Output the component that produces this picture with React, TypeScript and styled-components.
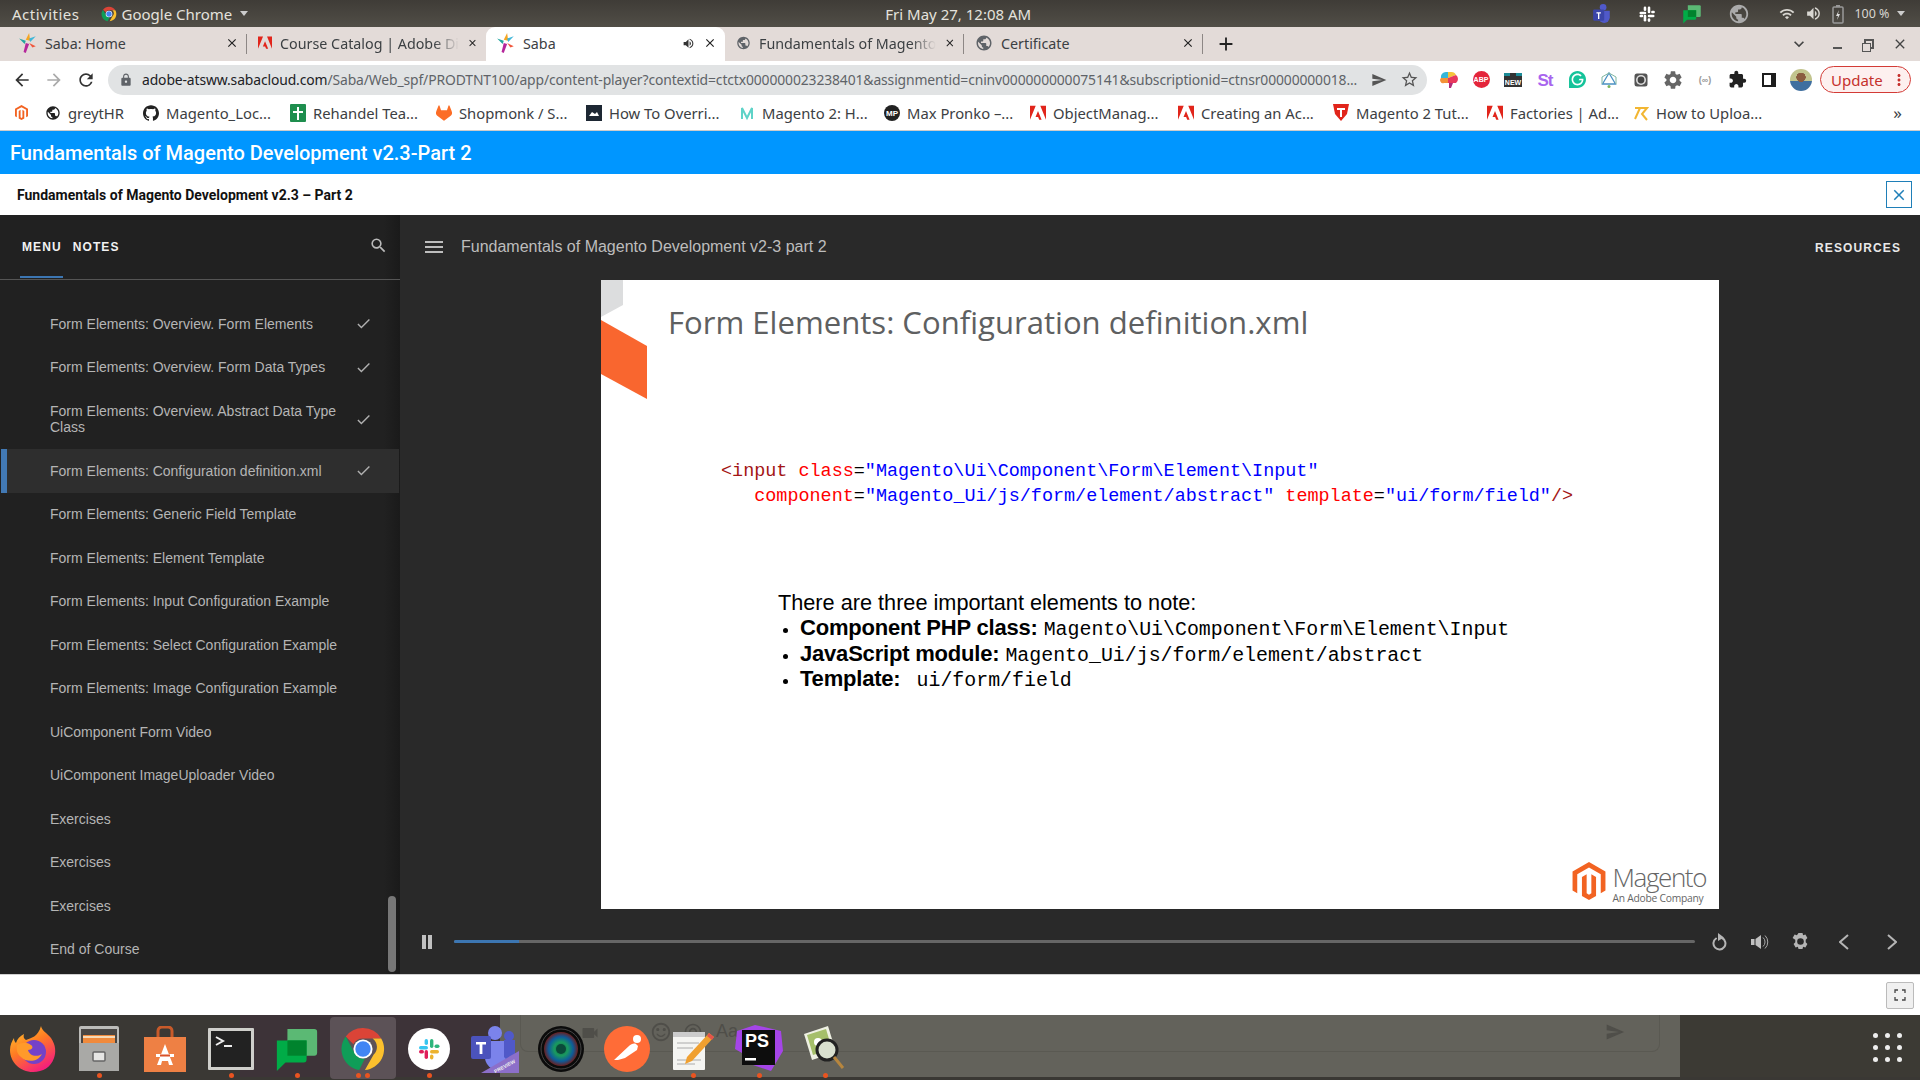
import React from 'react';
import styled, { createGlobalStyle } from 'styled-components';
import {
  SiGithub, SiGitlab, SiMagento, SiGrammarly,
} from 'react-icons/si';
import {
  MdArrowBack, MdArrowForward, MdRefresh, MdLock, MdStarBorder, MdSearch, MdMenu, MdCheck,
  MdClose, MdSettings, MdMoreVert, MdExtension, MdVolumeUp, MdWifi, MdAdd,
  MdExpandMore, MdPublic, MdSend, MdSentimentSatisfiedAlt,
  MdVideocam, MdAlternateEmail,
} from 'react-icons/md';

const GlobalStyle = createGlobalStyle`
  html, body { margin: 0; padding: 0; background: #fff; }
  body { font-family: "Liberation Sans", Arial, sans-serif; overflow: hidden; }
  * { box-sizing: border-box; }
`;

const Screen = styled.div`
  width: 1920px;
  height: 1080px;
  display: flex;
  flex-direction: column;
  overflow: hidden;
`;

/* ---- ubuntu top bar ---- */
const TopBar = styled.div`
  height: 27px;
  flex: none;
  display: grid;
  grid-template-columns: 1fr auto 1fr;
  align-items: center;
  padding: 0 15.5px 0 12px;
  background: linear-gradient(#3f3c37, #514e47);
  color: #e4e2dd;
  font-family: "Noto Sans", sans-serif;
  font-size: 15px;
`;
const TopLeft = styled.div`
  display: flex;
  align-items: center;
`;
const ActivitiesLabel = styled.span`
  letter-spacing: 0.5px;
`;
const AppMenu = styled.div`
  display: flex;
  align-items: center;
  gap: 5px;
  margin-left: 21px;
`;
const Caret = styled.span<{ $tight?: boolean }>`
  width: 0;
  height: 0;
  margin-left: ${p => (p.$tight ? -3 : 3)}px;
  border-left: 4px solid transparent;
  border-right: 4px solid transparent;
  border-top: 5px solid #ccc;
`;
const TopRight = styled.div`
  display: flex;
  align-items: center;
  justify-content: flex-end;
  gap: 26px;
  color: #d8d6d1;
`;
const TrayGap = styled.div`
  display: flex;
  align-items: center;
  gap: 10px;
  margin-left: 3.5px;
`;
const TrayText = styled.span`
  font-size: 12.5px;
`;

/* ---- chrome ---- */
const TabStrip = styled.div`
  height: 34px;
  flex: none;
  display: flex;
  align-items: stretch;
  padding-left: 8px;
  background: #e3dbd8;
  font-family: "Noto Sans", sans-serif;
  font-size: 14.3px;
  color: #3c4043;
`;
const Tab = styled.div<{ $active?: boolean; $sep?: boolean }>`
  position: relative;
  width: 239px;
  display: flex;
  align-items: center;
  gap: 8px;
  padding: 0 8px 2px 11px;
  background: ${p => (p.$active ? '#fff' : 'transparent')};
  border-radius: ${p => (p.$active ? '9px 9px 0 0' : '0')};
  &::after {
    content: '';
    display: ${p => (p.$sep ? 'block' : 'none')};
    position: absolute;
    right: 0;
    top: 7px;
    bottom: 7px;
    width: 1px;
    background: #8d8785;
  }
`;
const TabTitle = styled.span<{ $fade?: boolean }>`
  flex: 1;
  white-space: nowrap;
  ${p => (p.$fade ? `
    -webkit-mask-image: linear-gradient(90deg, #000 86%, transparent);
    mask-image: linear-gradient(90deg, #000 86%, transparent);
  ` : '')}
`;
const NewTab = styled.div`
  display: flex;
  align-items: center;
  margin-left: 12px;
  color: #222;
`;
const WindowControls = styled.div`
  margin-left: auto;
  display: flex;
  align-items: center;
  gap: 16px;
  padding-right: 12px;
  color: #444;
`;
const Minimize = styled.span`
  width: 9px;
  height: 2px;
  margin: 8px 6px 0 8px;
  background: #555;
`;
const Restore = styled.span`
  position: relative;
  width: 10px;
  height: 10px;
  border: 2px solid #555;
  margin-right: 2px;
  &::after {
    content: '';
    position: absolute;
    left: -4px;
    top: 2px;
    width: 7px;
    height: 7px;
    border: 1.5px solid #555;
    background: #e3dbd8;
  }
`;

const Toolbar = styled.div`
  height: 37px;
  flex: none;
  display: flex;
  align-items: center;
  padding-left: 12px;
  background: #fff;
  color: #444;
`;
const NavIcons = styled.div`
  display: flex;
  gap: 12px;
  margin-right: 12px;
`;
const Omnibox = styled.div`
  width: 1319px;
  height: 30px;
  flex: none;
  display: flex;
  align-items: center;
  padding: 0 8px 0 11px;
  border-radius: 15px;
  background: #e1e3e4;
  font-family: "Noto Sans", sans-serif;
  font-size: 13.9px;
  color: #5f6368;
`;
const UrlText = styled.div`
  flex: 1;
  margin-left: 9px;
  white-space: nowrap;
  letter-spacing: -0.12px;
  b { font-weight: 400; color: #202124; }
`;
const OmniActions = styled.div`
  display: flex;
  align-items: center;
  gap: 13px;
  color: #555;
`;
const Extensions = styled.div`
  display: flex;
  align-items: center;
  margin-left: 6px;
`;
const ExtSlot = styled.div`
  width: 32px;
  height: 30px;
  display: flex;
  align-items: center;
  justify-content: center;
  font-family: "Liberation Sans", sans-serif;
`;
const AbpBadge = styled.span`
  width: 17px;
  height: 17px;
  display: flex;
  align-items: center;
  justify-content: center;
  border-radius: 50%;
  background: #e4253b;
  color: #fff;
  font-size: 7px;
  font-weight: 700;
`;
const NewBadge = styled.span`
  padding: 3px 1px 0;
  border-top: 3px dashed #1c8b97;
  background: #333;
  color: #fff;
  font-size: 7px;
  font-weight: 700;
  line-height: 8px;
`;
const StBadge = styled.span`
  margin-top: 2px;
  color: #a865ee;
  font-size: 17px;
  font-weight: 700;
  letter-spacing: -1px;
`;
const WaveBadge = styled.span`
  color: #999;
  font-size: 9px;
  font-weight: 700;
`;
const Avatar = styled.span`
  width: 22px;
  height: 22px;
  border-radius: 50%;
  background: radial-gradient(circle at 50% 38%, #8a5b3f 0 26%, transparent 27%),
    linear-gradient(#c2c48e 0 55%, #3f6f9f 55%);
`;
const UpdatePill = styled.div`
  width: 91px;
  height: 27px;
  margin-left: 3px;
  display: flex;
  align-items: center;
  justify-content: space-between;
  padding: 0 2px 0 10px;
  border: 1px solid #d33b36;
  border-radius: 14px;
  background: #fdf0ef;
  color: #c5302c;
  font-family: "Noto Sans", sans-serif;
  font-size: 15px;
`;

const Bookmarks = styled.div`
  height: 33px;
  flex: none;
  display: flex;
  align-items: center;
  padding: 0 0 3px 14px;
  background: #fff;
  border-bottom: 1px solid #ccc;
  font-family: "Noto Sans", sans-serif;
  font-size: 14.8px;
  color: #3c4043;
`;
const Bookmark = styled.div<{ $w: number }>`
  width: ${p => p.$w}px;
  flex: none;
  display: flex;
  align-items: center;
  gap: 7px;
  white-space: nowrap;
`;
const MoreBookmarks = styled.span`
  margin-left: auto;
  padding-right: 18px;
  font-size: 17px;
`;

/* ---- course page ---- */
const CourseBar = styled.div`
  height: 43px;
  flex: none;
  display: flex;
  align-items: center;
  padding-left: 10px;
  background: #0096ff;
  color: #fff;
  font-family: Roboto, sans-serif;
  font-size: 20px;
  font-weight: 500;
`;
const SubBar = styled.div`
  height: 41px;
  flex: none;
  display: flex;
  align-items: center;
  justify-content: space-between;
  padding: 0 8px 0 17px;
  background: #fff;
  color: #111;
  font-family: Roboto, sans-serif;
  font-size: 14px;
  font-weight: 700;
`;
const CloseButton = styled.div`
  width: 26px;
  height: 27px;
  display: flex;
  align-items: center;
  justify-content: center;
  border: 1px solid #1f7fb8;
  color: #1f7fb8;
`;

const Player = styled.div`
  height: 759px;
  flex: none;
  display: flex;
  background: #292929;
`;
const Sidebar = styled.aside`
  position: relative;
  width: 400px;
  flex: none;
  display: flex;
  flex-direction: column;
  overflow: hidden;
  background: linear-gradient(90deg, #212121 96%, #1a1a1a);
`;
const SideHeader = styled.div`
  height: 65px;
  flex: none;
  display: flex;
  align-items: center;
  justify-content: space-between;
  padding: 0 12px 0 22px;
  border-bottom: 1px solid #555;
`;
const SideTabs = styled.div`
  display: flex;
  gap: 11px;
`;
const SideTab = styled.span<{ $active?: boolean }>`
  position: relative;
  color: #f2f2f2;
  font-size: 12px;
  font-weight: 700;
  letter-spacing: 1.1px;
  &::after {
    content: '';
    display: ${p => (p.$active ? 'block' : 'none')};
    position: absolute;
    left: -2px;
    right: -1px;
    top: 36px;
    height: 2px;
    background: #3c76b2;
  }
`;
const SearchIcon = styled.span`
  display: flex;
  margin-top: -3px;
  color: #bbb;
`;
const Lessons = styled.div`
  flex: 1;
  display: flex;
  flex-direction: column;
  padding: 22px 0 0 0;
`;
const Lesson = styled.div<{ $active?: boolean; $tall?: boolean }>`
  width: 398px;
  height: ${p => (p.$tall ? 60 : 43.5)}px;
  flex: none;
  display: flex;
  align-items: center;
  justify-content: space-between;
  padding: 0 27px 0 50px;
  margin-left: 1px;
  background: ${p => (p.$active ? '#2e2e2e' : 'transparent')};
  border-left: ${p => (p.$active ? '6px solid #4279b4' : '0')};
  padding-left: ${p => (p.$active ? 43 : 49)}px;
  color: #b5b5b5;
  font-size: 14px;
  line-height: 16px;
`;
const LessonTitle = styled.span`
  width: 300px;
`;
const CheckMark = styled.span`
  display: flex;
  color: #b0b0b0;
`;
const ScrollThumb = styled.div`
  position: absolute;
  left: 388px;
  bottom: 2px;
  width: 8px;
  height: 76px;
  border-radius: 4px;
  background: #777;
`;

const Stage = styled.main`
  flex: 1;
  display: flex;
  flex-direction: column;
  min-width: 0;
`;
const StageHeader = styled.div`
  height: 65px;
  flex: none;
  display: flex;
  align-items: center;
  padding: 0 19px 2px 22px;
  color: #bdbdbd;
  font-size: 16px;
`;
const StageTitle = styled.span`
  flex: 1;
  margin-left: 15px;
`;
const ResourcesLink = styled.span`
  margin-top: 2px;
  color: #e8e8e8;
  font-size: 12px;
  font-weight: 700;
  letter-spacing: 1.1px;
`;
const SlideArea = styled.div`
  flex: 1;
  padding-left: 201px;
`;
const Slide = styled.section`
  position: relative;
  width: 1118px;
  height: 629px;
  padding: 16px 0 0 67px;
  background: #fff;
  color: #000;
`;
const SlideCorner = styled.svg`
  position: absolute;
  left: 0;
  top: 0;
`;
const SlideTitle = styled.h1`
  margin: 0;
  color: #5e6061;
  font-family: "Open Sans", sans-serif;
  font-size: 31.1px;
  font-weight: 400;
  line-height: 52px;
`;
const CodeBlock = styled.pre`
  margin: 112px 0 0 53px;
  font-family: "Liberation Mono", monospace;
  font-size: 18.45px;
  line-height: 24.5px;
`;
const Tag = styled.span`
  color: #a31515;
`;
const Attr = styled.span`
  color: #ff0000;
`;
const Str = styled.span`
  color: #0000ff;
`;
const Notes = styled.div`
  width: fit-content;
  margin: 81px 0 0 110px;
  font-size: 21.7px;
  line-height: 25.4px;
`;
const NoteList = styled.ul`
  margin: 0;
  padding: 0 0 0 22px;
  li { padding: 0; height: 25.4px; }
  li::marker { font-size: 18px; }
`;
const NoteLabel = styled.b`
  font-size: 22px;
  letter-spacing: -0.2px;
`;
const NoteCode = styled.span<{ $indent?: boolean }>`
  margin-left: ${p => (p.$indent ? 10 : 0)}px;
  font-family: "Liberation Mono", monospace;
  font-size: 19.9px;
  line-height: 1;
`;
const BrandMark = styled.div`
  position: absolute;
  right: 13px;
  bottom: 5px;
  display: flex;
  gap: 4px;
  color: #f26322;
`;
const BrandText = styled.div`
  display: flex;
  flex-direction: column;
  color: #666;
`;
const BrandName = styled.span`
  font-family: "Open Sans", sans-serif;
  font-size: 26px;
  font-weight: 300;
  letter-spacing: -1.4px;
  line-height: 30px;
`;
const BrandSub = styled.span`
  font-family: "Open Sans", sans-serif;
  font-size: 10.3px;
  letter-spacing: -0.25px;
  line-height: 12px;
`;
const Controls = styled.div`
  height: 65px;
  flex: none;
  display: flex;
  align-items: center;
  padding: 0 3px 0 22px;
  color: #b5b5b5;
`;
const ProgressTrack = styled.div`
  width: 1241px;
  height: 3px;
  flex: none;
  margin: 0 4px 0 22px;
  border-radius: 2px;
  overflow: hidden;
  background: #666;
`;
const ProgressFill = styled.div`
  height: 100%;
  background: #3c76b2;
`;
const ControlIcon = styled.span<{ $w: number }>`
  width: ${p => p.$w}px;
  flex: none;
  display: flex;
  justify-content: center;
`;

const FooterBand = styled.div`
  height: 41px;
  flex: none;
  display: flex;
  align-items: center;
  justify-content: flex-end;
  padding: 0 6px 0 0;
  border-top: 1px solid #d0d0d0;
  background: #fff;
`;
const FullscreenButton = styled.div`
  width: 28px;
  height: 27px;
  display: flex;
  align-items: center;
  justify-content: center;
  border: 1px solid #bbb;
  border-radius: 2px;
  background: #f0f0f0;
  color: #444;
`;

/* ---- ubuntu dock ---- */
const Dock = styled.div`
  position: relative;
  flex: 1;
  display: flex;
  background: linear-gradient(90deg, #3a3834 0 240px, #3d3338 240px 500px, #63625b 500px 1680px, #3c3a34 1680px);
  box-shadow: inset 0 -3px 0 #3a3834;
`;
const DockItem = styled.div<{ $active?: boolean }>`
  position: relative;
  width: 66px;
  height: 62px;
  margin-top: 2px;
  padding-top: 1px;
  flex: none;
  display: flex;
  align-items: center;
  justify-content: center;
  border-radius: 4px;
  background: ${p => (p.$active ? '#5c5257' : 'transparent')};
`;
const DockDots = styled.div`
  position: absolute;
  bottom: 1px;
  left: 0;
  right: 0;
  display: flex;
  justify-content: center;
  gap: 4px;
`;
const DockDot = styled.span`
  width: 5px;
  height: 5px;
  border-radius: 50%;
  background: #e95420;
`;
const GridButton = styled.div`
  position: absolute;
  right: 18px;
  top: 18px;
  display: grid;
  grid-template-columns: repeat(3, 5px);
  gap: 7px 7px;
`;
const GridDot = styled.span`
  width: 5px;
  height: 5px;
  border-radius: 50%;
  background: #eee;
`;
const GhostIcon = styled.span<{ $x: number; $y: number }>`
  position: absolute;
  left: ${p => p.$x}px;
  top: ${p => p.$y}px;
  color: #4f4e49;
  font-size: 18px;
  line-height: 18px;
`;
const GhostBox = styled.div`
  position: absolute;
  left: 520px;
  width: 1140px;
  top: 0;
  height: 37px;
  border: 1px solid #5a5952;
  border-top: 0;
  border-radius: 0 0 8px 8px;
`;
const DockIconWrap = styled.span`
  position: relative;
  display: flex;
`;

/* ---- favicons ---- */
const SabaIcon = () => (
  <svg width="18" height="20" viewBox="0 0 16 18">
    <path d="M9 0l1 7-4-1z" fill="#f5a623" />
    <path d="M15 3L10 8 9 5z" fill="#3fb6d8" />
    <path d="M0 5l6 2-1 3z" fill="#23a6a0" />
    <path d="M6 9l3 1-3 8-2-1z" fill="#b5279b" />
    <path d="M9 9l6 3-3 1z" fill="#f0563c" />
  </svg>
);
const AdobeIcon = ({ size = 15 }: { size?: number }) => (
  <svg width={size} height={size} viewBox="0 0 24 24" fill="#e1251b">
    <path d="M0 1h8.600L0 22zM24 1h-8.600L24 22zM12 9l5.400 13h-3.600l-1.600-4H8.300z" />
  </svg>
);
const ChromeFavicon = ({ size = 16 }: { size?: number }) => (
  <svg width={size} height={size} viewBox="0 0 48 48">
    <path d="M24 2a22 22 0 0 1 19 11H24a11 11 0 0 0-10 6L6 11A22 22 0 0 1 24 2z" fill="#db4437" />
    <path d="M43 13a22 22 0 0 1-17 33l9-16a11 11 0 0 0-1-17z" fill="#fbc02d" />
    <path d="M6 11l9 17a11 11 0 0 0 11 6l-6 12A22 22 0 0 1 6 11z" fill="#0f9d58" />
    <circle cx="24" cy="24" r="10" fill="#fff" />
    <circle cx="24" cy="24" r="8" fill="#4285f4" />
  </svg>
);
const TeamsTray = () => (
  <svg width="20" height="20" viewBox="0 0 18 18">
    <circle cx="10" cy="3" r="3" fill="#5059c9" />
    <path d="M6 6h10v6a5 5 0 0 1-10 0z" fill="#5059c9" />
    <rect x="1" y="5" width="10" height="10" rx="1" fill="#3b45a8" />
    <path d="M4 7.500h4v1H6.600v5H5.400v-5H4z" fill="#fff" />
  </svg>
);
const SlackGlyph = ({ size = 18, mono }: { size?: number; mono?: boolean }) => {
  const c = mono ? ['#fff', '#fff', '#fff', '#fff'] : ['#36c5f0', '#2eb67d', '#ecb22e', '#e01e5a'];
  return (
    <svg width={size} height={size} viewBox="0 0 24 24">
      <rect x="2" y="9" width="9" height="3.400" rx="1.700" fill={c[0]} />
      <rect x="7.600" y="2" width="3.400" height="6" rx="1.700" fill={c[0]} />
      <rect x="13" y="2" width="3.400" height="9" rx="1.700" fill={c[1]} />
      <rect x="17.500" y="7.600" width="5" height="3.400" rx="1.700" fill={c[1]} />
      <rect x="13" y="13" width="9" height="3.400" rx="1.700" fill={c[2]} />
      <rect x="13" y="17.500" width="3.400" height="5" rx="1.700" fill={c[2]} />
      <rect x="7.600" y="13" width="3.400" height="9" rx="1.700" fill={c[3]} />
      <rect x="2" y="13" width="5" height="3.400" rx="1.700" fill={c[3]} />
    </svg>
  );
};
const ChatIcon = ({ size = 20 }: { size?: number }) => (
  <svg width={size} height={size} viewBox="0 0 48 48">
    <path d="M14 3h28a3 3 0 0 1 3 3v22a3 3 0 0 1-3 3H14z" fill="#5bb974" />
    <path d="M3 15h31v20a3 3 0 0 1-3 3H12l-9 9z" fill="#00ac47" />
    <path d="M14 15h20v16H14z" fill="#00832d" />
  </svg>
);
const GlobeGrey = ({ size = 20, color = '#555' }: { size?: number; color?: string }) => (
  <MdPublic size={size} color={color} />
);
const BatteryIcon = () => (
  <svg width="12" height="20" viewBox="0 0 12 20">
    <rect x="1" y="3" width="10" height="16" rx="1" fill="none" stroke="#999" strokeWidth="1.500" />
    <rect x="4" y="1" width="4" height="2" fill="#999" />
    <path d="M7 6L4 12h2l-1 4 3-6H6z" fill="#ddd" />
  </svg>
);
const BrainIcon = () => (
  <svg width="18" height="17" viewBox="0 0 18 17">
    <path d="M1 7a5 5 0 0 1 5-6h3l-1 6z" fill="#35b6d9" />
    <path d="M8 1h3a5 5 0 0 1 5 3l-8 3z" fill="#f5c33b" />
    <path d="M1 7h8l-1 5H4a3 3 0 0 1-3-5z" fill="#f39237" />
    <path d="M8 7l8-3a5 5 0 0 1 0 8H8z" fill="#e8385c" />
    <path d="M9 12h4l-2 5h-2z" fill="#b12a78" />
  </svg>
);
const HexGraph = () => (
  <svg width="18" height="18" viewBox="0 0 18 18" fill="none">
    <path d="M9 2l6.500 11h-13z" stroke="#4a90c2" strokeWidth="1.300" />
    <path d="M9 2L2 6v7M9 2l7 4v7" stroke="#7fb6a0" strokeWidth="1" />
    <circle cx="9" cy="15.500" r="1.500" fill="#7ab55c" />
  </svg>
);
const RecordIcon = () => (
  <svg width="14" height="14" viewBox="0 0 14 14">
    <rect x="0.500" y="0.500" width="13" height="13" rx="2.500" fill="#555" />
    <circle cx="7" cy="7" r="5" fill="#ddd" />
    <circle cx="7" cy="7" r="3.400" fill="#444" />
  </svg>
);
const BugGear = () => <MdSettings size={22} color="#666" />;
const PanelIcon = () => (
  <svg width="14" height="14" viewBox="0 0 14 14">
    <rect width="14" height="14" fill="#1d1d1d" />
    <rect x="2" y="2" width="7" height="10" fill="#fff" />
  </svg>
);
const MaxPronko = () => (
  <svg width="16" height="16" viewBox="0 0 16 16">
    <circle cx="8" cy="8" r="8" fill="#222" />
    <text x="8" y="11" textAnchor="middle" fontSize="8" fontWeight="700" fontFamily="Liberation Sans" fill="#fff">MP</text>
  </svg>
);
const ShieldT = () => (
  <svg width="16" height="17" viewBox="0 0 16 17">
    <path d="M0 0h16l-2 10-6 7-6-7z" fill="#e1251b" />
    <path d="M4 4h8v2H9v7H7V6H4z" fill="#fff" />
  </svg>
);
const FoxIcon = () => <SiGitlab size={16} color="#fc6d26" />;
const CrossIcon = () => (
  <svg width="16" height="18" viewBox="0 0 16 18">
    <rect width="16" height="18" rx="1" fill="#1e8e4e" />
    <path d="M7 3h2v4h4v2H9v7H7V9H3V7h4z" fill="#fff" />
  </svg>
);
const DarkCard = () => (
  <svg width="16" height="16" viewBox="0 0 16 16">
    <rect width="16" height="16" fill="#1d2733" />
    <path d="M3 11l3-4 3 2 2-2 2 4z" fill="#fff" />
  </svg>
);
const TealM = () => (
  <svg width="16" height="16" viewBox="0 0 16 16" fill="none" stroke="#5fd3c8" strokeWidth="2">
    <path d="M3 14V3l5 10 5-10v11" />
  </svg>
);
const YellowR = () => (
  <svg width="16" height="16" viewBox="0 0 16 16" fill="none" stroke="#f2b632" strokeWidth="2">
    <path d="M2 3h12l-5 6 5 6M7 3L2 14" />
  </svg>
);

/* ---- player control glyphs ---- */
const PauseGlyph = () => (
  <svg width="10" height="14" viewBox="0 0 10 14" fill="#c0c0c0" style={{ flex: 'none' }}>
    <rect width="4" height="14" />
    <rect x="6" width="4" height="14" />
  </svg>
);
const ReplayGlyph = () => (
  <svg width="16" height="18" viewBox="0 0 16 18" fill="none">
    <path d="M5 5.500a6 6 0 1 0 6-.5" stroke="#b5b5b5" strokeWidth="2" strokeLinecap="round" />
    <path d="M7 0l6 4.500L7 8z" fill="#b5b5b5" />
  </svg>
);
const SpeakerGlyph = () => (
  <svg width="18" height="16" viewBox="0 0 18 16" fill="none">
    <rect y="5" width="3.500" height="6" fill="#c0c0c0" />
    <path d="M4.500 5L10 1v14l-5.500-4z" fill="#c0c0c0" />
    <path d="M12 3.500a6 6 0 0 1 0 9M14 1.500a9 9 0 0 1 0 13" stroke="#aaa" strokeWidth="1" />
  </svg>
);
const GearGlyph = () => (
  <svg width="17" height="17" viewBox="0 0 17 17">
    <path d="M6.500 0h4l.6 2.300 2.300-.7 2 3.400-1.700 1.700.0 2.600 1.700 1.700-2 3.400-2.300-.7-.6 2.300h-4l-.6-2.300-2.300.7-2-3.400 1.700-1.700 0-2.600L.6 5l2-3.400 2.300.7z" fill="#b5b5b5" />
    <circle cx="8.500" cy="8.500" r="3.300" fill="#292929" />
  </svg>
);
const ChevronGlyph = ({ flip }: { flip?: boolean }) => (
  <svg width="10" height="16" viewBox="0 0 10 16" fill="none" stroke="#b5b5b5" strokeWidth="2">
    <path d={flip ? 'M1 1l8 7-8 7' : 'M9 1L1 8l8 7'} />
  </svg>
);

/* ---- dock icons ---- */
const FirefoxIcon = () => (
  <svg width="46" height="46" viewBox="0 0 46 46">
    <defs>
      <linearGradient id="ffA" x1="0" y1="0" x2="0.6" y2="1">
        <stop offset="0" stopColor="#ffcf2e" />
        <stop offset="0.5" stopColor="#ff7b23" />
        <stop offset="1" stopColor="#f5217a" />
      </linearGradient>
    </defs>
    <path d="M31 0c1 5 6 7 10 12 5 7 5 15 3 20-3 9-11 14-21 14C10 46 0 36 0 24c0-5 2-9 4-12 0 3 1 4 2 5 1-4 4-7 8-9-1 3 0 5 2 6 5-2 12-3 15-14z" fill="url(#ffA)" />
    <circle cx="24" cy="26" r="12" fill="#7442c8" />
    <path d="M7 19c5-3 10-3 14 0 3 2 1 5-3 5 1 5 8 8 14 4-4 8-15 9-21 3-4-3-5-8-4-12z" fill="#ff9a2a" />
  </svg>
);
const FilesIcon = () => (
  <svg width="42" height="46" viewBox="0 0 42 46">
    <rect x="1" y="0" width="40" height="44" rx="2" fill="#bcbcb9" />
    <rect x="3" y="3" width="36" height="14" fill="#4a4744" />
    <rect x="5" y="9" width="32" height="8" fill="#f08a3c" />
    <rect x="5" y="10" width="32" height="2" fill="#f7d9b5" />
    <rect x="1" y="17" width="40" height="28" fill="#a9a9a6" />
    <rect x="15" y="26" width="12" height="9" rx="1" fill="#e6e6e4" stroke="#666" strokeWidth="1.500" />
  </svg>
);
const StoreIcon = () => (
  <svg width="42" height="46" viewBox="0 0 42 46">
    <path d="M14 12V5a4 4 0 0 1 4-4h6a4 4 0 0 1 4 4v7" fill="none" stroke="#c85a2a" strokeWidth="3" />
    <path d="M0 11h42v35H0z" fill="#ee8044" />
    <path d="M21 18l8 21h-4l-1-4h-6l-1 4h-4z" fill="#fff" />
    <rect x="12" y="28" width="18" height="3" fill="#fff" />
    <rect x="16" y="28.500" width="10" height="2" fill="#d9532a" />
  </svg>
);
const TerminalIcon = () => (
  <svg width="46" height="42" viewBox="0 0 46 42">
    <rect width="46" height="42" rx="1" fill="#cfcfcb" />
    <rect x="3" y="3" width="40" height="36" fill="#222" />
    <path d="M8 9l7 4-7 4" fill="none" stroke="#eee" strokeWidth="2" />
    <rect x="16" y="17" width="8" height="2" fill="#eee" />
  </svg>
);
const SlackDock = () => (
  <svg width="42" height="42" viewBox="0 0 42 42">
    <circle cx="21" cy="21" r="21" fill="#fff" />
    <g transform="translate(9 9)">
      <SlackGlyph size={24} />
    </g>
  </svg>
);
const TeamsDock = () => (
  <svg width="48" height="48" viewBox="0 0 48 48">
    <circle cx="24" cy="8" r="7" fill="#7b83eb" />
    <circle cx="38" cy="11" r="5" fill="#5059c9" />
    <path d="M14 16h26v16a12 12 0 0 1-26 0z" fill="#7b83eb" />
    <path d="M33 15h11v15a6 6 0 0 1-11 2z" fill="#5059c9" />
    <rect x="0" y="11" width="20" height="23" rx="2" fill="#4b53bc" />
    <path d="M5 17h10v2.500h-3.600V29H8.600v-9.500H5z" fill="#fff" />
    <path d="M10 48l38-22v22z" fill="#8c6fc9" />
    <text x="22" y="45" fontSize="5" fontWeight="700" fontFamily="Liberation Sans" fill="#eee" transform="rotate(-28 30 42)">PREVIEW</text>
  </svg>
);
const CameraIcon = () => (
  <svg width="46" height="46" viewBox="0 0 46 46">
    <defs>
      <radialGradient id="lens">
        <stop offset="0" stopColor="#0c5e48" />
        <stop offset="0.4" stopColor="#1a9a5e" />
        <stop offset="0.72" stopColor="#0d5b9a" />
        <stop offset="1" stopColor="#6a2020" />
      </radialGradient>
    </defs>
    <circle cx="23" cy="23" r="23" fill="#0b0b0b" />
    <circle cx="23" cy="23" r="20" fill="none" stroke="#444" strokeWidth="1" />
    <circle cx="23" cy="23" r="17" fill="url(#lens)" />
    <circle cx="23" cy="23" r="5" fill="#0a4a3a" />
  </svg>
);
const PostmanIcon = () => (
  <svg width="46" height="46" viewBox="0 0 46 46">
    <circle cx="23" cy="23" r="23" fill="#ff6c37" />
    <circle cx="33" cy="13" r="4" fill="#fff" />
    <path d="M10 34l15-14c2-2 5-3 7-2l2 2-1 4-12 8-7 2z" fill="#fff" />
  </svg>
);
const NotepadIcon = () => (
  <svg width="44" height="44" viewBox="0 0 44 44">
    <rect x="2" y="5" width="32" height="38" rx="1" fill="#f5f5f2" />
    <path d="M2 5h32v5H2z" fill="#ccc" />
    <path d="M6 16h22M6 21h16M6 33h24M6 37h18" stroke="#aaa" strokeWidth="1" />
    <path d="M38 6l5 4-22 24-7 3 2-7z" fill="#f0a030" />
    <path d="M38 6l5 4-2 3-5-4z" fill="#e5534b" />
  </svg>
);
const PhpStormIcon = () => (
  <svg width="48" height="48" viewBox="0 0 48 48">
    <path d="M2 6l18-6 26 6 2 20-12 20-18-6-4-8L0 24z" fill="#a545e8" />
    <rect x="7" y="5" width="33" height="35" fill="#0d0d0d" />
    <text x="10" y="22" fontSize="18" fontWeight="700" fontFamily="Liberation Sans" fill="#fff">PS</text>
    <rect x="10" y="33" width="11" height="2.500" fill="#fff" />
  </svg>
);
const ViewerIcon = () => (
  <svg width="44" height="46" viewBox="0 0 44 46">
    <path d="M1 8l24-8 8 26-24 8z" fill="#eef0e2" />
    <path d="M4 9l19-6 6 20-19 6z" fill="#a5bf6a" />
    <circle cx="15" cy="16" r="4" fill="#fff" />
    <circle cx="24" cy="24" r="10" fill="#d9e0cf" stroke="#222" strokeWidth="3" />
    <path d="M31 31l9 11" stroke="#b7863e" strokeWidth="3" />
  </svg>
);

const tabs = [
  { icon: <SabaIcon />, title: 'Saba: Home', sep: true },
  { icon: <AdobeIcon size={18} />, title: 'Course Catalog | Adobe Di', fade: true },
  { icon: <SabaIcon />, title: 'Saba', active: true, sound: true },
  { icon: <GlobeGrey size={18} color="#5f6368" />, title: 'Fundamentals of Magento', sep: true, fade: true },
  { icon: <GlobeGrey size={18} color="#5f6368" />, title: 'Certificate', sep: true },
];

const bookmarks = [
  { w: 31, icon: <SiMagento size={15} color="#f26322" /> },
  { w: 98, icon: <GlobeGrey size={16} color="#222" />, title: 'greytHR' },
  { w: 147, icon: <SiGithub size={16} color="#222" />, title: 'Magento_Loc...' },
  { w: 146, icon: <CrossIcon />, title: 'Rehandel Tea...' },
  { w: 150, icon: <FoxIcon />, title: 'Shopmonk / S...' },
  { w: 153, icon: <DarkCard />, title: 'How To Overri...' },
  { w: 145, icon: <TealM />, title: 'Magento 2: H...' },
  { w: 146, icon: <MaxPronko />, title: 'Max Pronko –...' },
  { w: 148, icon: <AdobeIcon size={16} />, title: 'ObjectManag...' },
  { w: 155, icon: <AdobeIcon size={16} />, title: 'Creating an Ac...' },
  { w: 154, icon: <ShieldT />, title: 'Magento 2 Tut...' },
  { w: 146, icon: <AdobeIcon size={16} />, title: 'Factories | Ad...' },
  { w: 150, icon: <YellowR />, title: 'How to Uploa...' },
];

const lessons = [
  { title: 'Form Elements: Overview. Form Elements', done: true },
  { title: 'Form Elements: Overview. Form Data Types', done: true },
  { title: 'Form Elements: Overview. Abstract Data Type Class', done: true, tall: true },
  { title: 'Form Elements: Configuration definition.xml', done: true, active: true },
  { title: 'Form Elements: Generic Field Template' },
  { title: 'Form Elements: Element Template' },
  { title: 'Form Elements: Input Configuration Example' },
  { title: 'Form Elements: Select Configuration Example' },
  { title: 'Form Elements: Image Configuration Example' },
  { title: 'UiComponent Form Video' },
  { title: 'UiComponent ImageUploader Video' },
  { title: 'Exercises' },
  { title: 'Exercises' },
  { title: 'Exercises' },
  { title: 'End of Course' },
];

const dockApps = [
  { icon: <FirefoxIcon />, dots: 0 },
  { icon: <FilesIcon />, dots: 1 },
  { icon: <StoreIcon />, dots: 0 },
  { icon: <TerminalIcon />, dots: 1 },
  { icon: <ChatIcon size={46} />, dots: 1 },
  { icon: <ChromeFavicon size={46} />, dots: 2, active: true },
  { icon: <SlackDock />, dots: 1 },
  { icon: <TeamsDock />, dots: 0 },
  { icon: <CameraIcon />, dots: 0 },
  { icon: <PostmanIcon />, dots: 0 },
  { icon: <NotepadIcon />, dots: 1 },
  { icon: <PhpStormIcon />, dots: 1 },
  { icon: <ViewerIcon />, dots: 1 },
];

const App = () => (
  <Screen>
    <GlobalStyle />
    <TopBar>
      <TopLeft>
        <ActivitiesLabel>Activities</ActivitiesLabel>
        <AppMenu>
          <ChromeFavicon size={16} />
          <span>Google Chrome</span>
          <Caret />
        </AppMenu>
      </TopLeft>
      <span>Fri May 27, 12:08 AM</span>
      <TopRight>
        <TeamsTray />
        <SlackGlyph mono />
        <ChatIcon />
        <GlobeGrey size={22} color="#aaa" />
        <TrayGap>
          <MdWifi size={16} />
          <MdVolumeUp size={17} />
          <BatteryIcon />
          <TrayText>100 %</TrayText>
          <Caret $tight />
        </TrayGap>
      </TopRight>
    </TopBar>

    <TabStrip>
      {tabs.map(t => (
        <Tab key={t.title} $active={t.active} $sep={t.sep}>
          {t.icon}
          <TabTitle $fade={t.fade}>{t.title}</TabTitle>
          {t.sound && <MdVolumeUp size={13} color="#333" />}
          <MdClose size={14} color="#222" />
        </Tab>
      ))}
      <NewTab><MdAdd size={22} /></NewTab>
      <WindowControls>
        <MdExpandMore size={20} />
        <Minimize />
        <Restore />
        <MdClose size={16} />
      </WindowControls>
    </TabStrip>

    <Toolbar>
      <NavIcons>
        <MdArrowBack size={20} color="#333" />
        <MdArrowForward size={20} color="#aaa" />
        <MdRefresh size={20} color="#333" />
      </NavIcons>
      <Omnibox>
        <MdLock size={14} />
        <UrlText>
          <b>adobe-atsww.sabacloud.com</b>/Saba/Web_spf/PRODTNT100/app/content-player?contextid=ctctx000000023238401&amp;assignmentid=cninv000000000075141&amp;subscriptionid=ctnsr00000000018...
        </UrlText>
        <OmniActions>
          <MdSend size={16} />
          <MdStarBorder size={19} />
        </OmniActions>
      </Omnibox>
      <Extensions>
        <ExtSlot><BrainIcon /></ExtSlot>
        <ExtSlot><AbpBadge>ABP</AbpBadge></ExtSlot>
        <ExtSlot><NewBadge>NEW</NewBadge></ExtSlot>
        <ExtSlot><StBadge>St</StBadge></ExtSlot>
        <ExtSlot><SiGrammarly size={17} color="#15c39a" /></ExtSlot>
        <ExtSlot><HexGraph /></ExtSlot>
        <ExtSlot><RecordIcon /></ExtSlot>
        <ExtSlot><BugGear /></ExtSlot>
        <ExtSlot><WaveBadge>(∞)</WaveBadge></ExtSlot>
        <ExtSlot><MdExtension size={19} color="#222" /></ExtSlot>
        <ExtSlot><PanelIcon /></ExtSlot>
        <ExtSlot><Avatar /></ExtSlot>
      </Extensions>
      <UpdatePill>
        Update
        <MdMoreVert size={18} />
      </UpdatePill>
    </Toolbar>

    <Bookmarks>
      {bookmarks.map((b, i) => (
        <Bookmark key={i} $w={b.w}>
          {b.icon}
          {b.title && <span>{b.title}</span>}
        </Bookmark>
      ))}
      <MoreBookmarks>»</MoreBookmarks>
    </Bookmarks>

    <CourseBar>Fundamentals of Magento Development v2.3-Part 2</CourseBar>
    <SubBar>
      <span>Fundamentals of Magento Development v2.3 – Part 2</span>
      <CloseButton><MdClose size={18} /></CloseButton>
    </SubBar>

    <Player>
      <Sidebar>
        <SideHeader>
          <SideTabs>
            <SideTab $active>MENU</SideTab>
            <SideTab>NOTES</SideTab>
          </SideTabs>
          <SearchIcon><MdSearch size={19} /></SearchIcon>
        </SideHeader>
        <Lessons>
          {lessons.map((l, i) => (
            <Lesson key={i} $active={l.active} $tall={l.tall}>
              <LessonTitle>{l.title}</LessonTitle>
              {l.done && <CheckMark><MdCheck size={17} /></CheckMark>}
            </Lesson>
          ))}
        </Lessons>
        <ScrollThumb />
      </Sidebar>
      <Stage>
        <StageHeader>
          <MdMenu size={24} />
          <StageTitle>Fundamentals of Magento Development v2-3 part 2</StageTitle>
          <ResourcesLink>RESOURCES</ResourcesLink>
        </StageHeader>
        <SlideArea>
          <Slide>
            <SlideCorner width="46" height="120" viewBox="0 0 46 120">
              <path d="M0 0h22v25L0 37z" fill="#dcddde" />
              <path d="M0 40l46 26v53L0 94z" fill="#f9662f" />
            </SlideCorner>
            <SlideTitle>Form Elements: Configuration definition.xml</SlideTitle>
            <CodeBlock>
              <Tag>&lt;input </Tag><Attr>class</Attr>=<Str>"Magento\Ui\Component\Form\Element\Input"</Str>{'\n'}
              {'   '}<Attr>component</Attr>=<Str>"Magento_Ui/js/form/element/abstract"</Str> <Attr>template</Attr>=<Str>"ui/form/field"</Str><Tag>/&gt;</Tag>
            </CodeBlock>
            <Notes>
              There are three important elements to note:
              <NoteList>
                <li><NoteLabel>Component PHP class:</NoteLabel> <NoteCode>Magento\Ui\Component\Form\Element\Input</NoteCode></li>
                <li><NoteLabel>JavaScript module:</NoteLabel> <NoteCode>Magento_Ui/js/form/element/abstract</NoteCode></li>
                <li><NoteLabel>Template:</NoteLabel> <NoteCode $indent>ui/form/field</NoteCode></li>
              </NoteList>
            </Notes>
            <BrandMark>
              <SiMagento size={38} />
              <BrandText>
                <BrandName>Magento</BrandName>
                <BrandSub>An Adobe Company</BrandSub>
              </BrandText>
            </BrandMark>
          </Slide>
        </SlideArea>
        <Controls>
          <PauseGlyph />
          <ProgressTrack><ProgressFill style={{ width: `${(65 / 1241) * 100}%` }} /></ProgressTrack>
          <ControlIcon $w={40}><ReplayGlyph /></ControlIcon>
          <ControlIcon $w={41}><SpeakerGlyph /></ControlIcon>
          <ControlIcon $w={41}><GearGlyph /></ControlIcon>
          <ControlIcon $w={46}><ChevronGlyph /></ControlIcon>
          <ControlIcon $w={50}><ChevronGlyph flip /></ControlIcon>
        </Controls>
      </Stage>
    </Player>

    <FooterBand>
      <FullscreenButton>
        <svg width="12" height="12" viewBox="0 0 12 12" fill="none" stroke="#444" strokeWidth="1.300">
          <path d="M1 4V1h3M8 1h3v3M11 8v3H8M4 11H1V8" />
        </svg>
      </FullscreenButton>
    </FooterBand>

    <Dock>
      <GhostBox />
      <GhostIcon $x={580} $y={8}><MdVideocam size={20} /></GhostIcon>
      <GhostIcon $x={650} $y={6}><MdSentimentSatisfiedAlt size={22} /></GhostIcon>
      <GhostIcon $x={683} $y={7}><MdAlternateEmail size={20} /></GhostIcon>
      <GhostIcon $x={716} $y={7}>Aa</GhostIcon>
      <GhostIcon $x={1605} $y={7}><MdSend size={20} /></GhostIcon>
      {dockApps.map((a, i) => (
        <DockItem key={i} $active={a.active}>
          <DockIconWrap>{a.icon}</DockIconWrap>
          {a.dots > 0 && (
            <DockDots>
              {Array.from({ length: a.dots }).map((_, j) => <DockDot key={j} />)}
            </DockDots>
          )}
        </DockItem>
      ))}
      <GridButton>
        {Array.from({ length: 9 }).map((_, i) => <GridDot key={i} />)}
      </GridButton>
    </Dock>
  </Screen>
);

export default App;
